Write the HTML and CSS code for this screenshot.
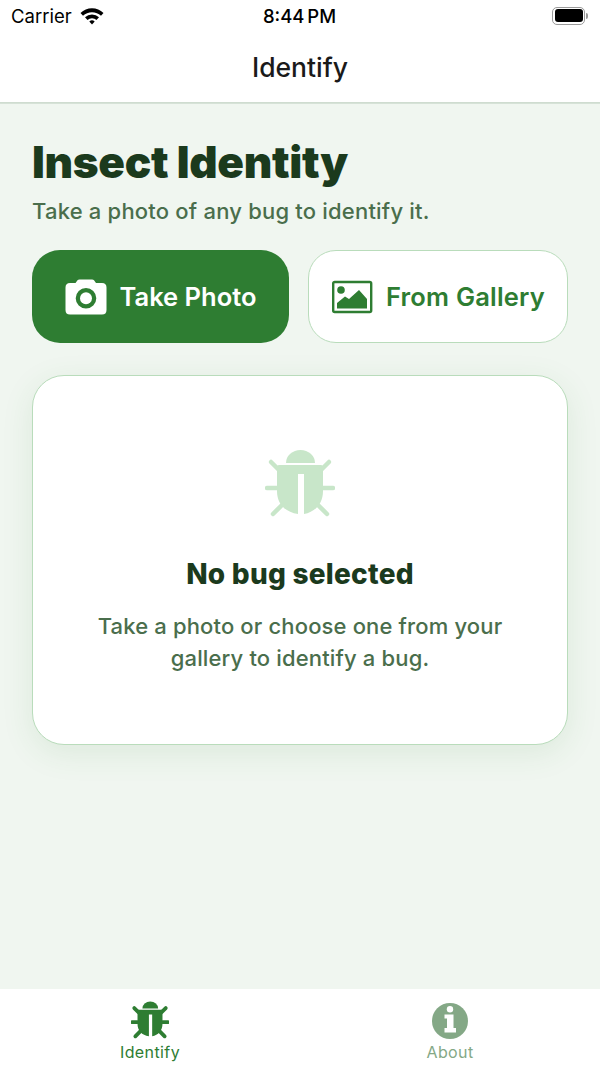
FILE: index.html
```html
<!DOCTYPE html>
<html>
<head>
    <title>Identify</title>
    <link rel="stylesheet" href="styles.css">
</head>
<body>
    <div class="app">
        <div class="status-bar">
            <div class="status-left">
                <span>Carrier</span>
                <svg class="wifi" width="24" height="18" viewBox="0 0 24 18">
                    <path d="M0.5 6 A16.5 16.5 0 0 1 23.5 6 L21 8.8 A13 13 0 0 0 3 8.8 Z" fill="#000"/>
                    <path d="M5 10.3 A10 10 0 0 1 19 10.3 L16.5 13 A6.4 6.4 0 0 0 7.5 13 Z" fill="#000"/>
                    <path d="M9.3 14.6 A3.8 3.8 0 0 1 14.7 14.6 L12 17.6 Z" fill="#000"/>
                </svg>
            </div>
            <div class="status-time">8:44 PM</div>
            <div class="status-right">
                <div class="battery"><div class="battery-fill"></div></div>
                <div class="battery-cap"></div>
            </div>
        </div>

        <header class="nav-bar">Identify</header>

        <main class="content">
            <h1>Insect Identity</h1>
            <p class="subtitle">Take a photo of any bug to identify it.</p>

            <div class="actions">
                <button class="btn btn-primary">
                    <svg width="42" height="36" viewBox="0 0 42 36">
                        <path fill="#fff" fill-rule="evenodd" d="M5 4 H10.5 L12.5 1.2 Q13.1 0.4 14.5 0.4 H27 Q28.4 0.4 29 1.2 L31 4 H37 Q41.5 4 41.5 8.5 V31 Q41.5 35.5 37 35.5 H5 Q0.5 35.5 0.5 31 V8.5 Q0.5 4 5 4 Z M21 9 A10.3 10.3 0 1 0 21 29.6 A10.3 10.3 0 1 0 21 9 Z"/>
                        <circle cx="21" cy="19.3" r="6" fill="#fff"/>
                    </svg>
                    <span>Take Photo</span>
                </button>
                <button class="btn btn-secondary">
                    <svg width="42" height="34" viewBox="0 0 42 34">
                        <rect x="2.2" y="2" width="38" height="30" rx="1.5" fill="none" stroke="#2e7d32" stroke-width="2.4"/>
                        <circle cx="10" cy="10" r="3.8" fill="#2e7d32"/>
                        <path fill="#2e7d32" d="M6 28.5 V23 L14 16.5 L18 19 L28 10 L36 19 V28.5 Z"/>
                    </svg>
                    <span>From Gallery</span>
                </button>
            </div>

            <section class="empty-card">
                <svg class="empty-icon" width="70" height="70" viewBox="0 0 70 70">
                    <use href="#bug"/>
                </svg>
                <h2>No bug selected</h2>
                <p>Take a photo or choose one from your<br>gallery to identify a bug.</p>
            </section>
        </main>

        <nav class="tab-bar">
            <div class="tab tab-active">
                <div class="tab-icon">
                    <svg width="38" height="38" viewBox="0 0 70 70">
                        <use href="#bug"/>
                    </svg>
                </div>
                <span>Identify</span>
            </div>
            <div class="tab tab-muted">
                <div class="tab-icon">
                    <svg width="36" height="36" viewBox="0 0 36 36">
                        <circle cx="18" cy="18" r="18" fill="#84a886"/>
                        <circle cx="18" cy="6.3" r="3.2" fill="#fff"/>
                        <path fill="#fff" d="M12.5 11.5 H21.5 V25 H24 V29.5 H12.5 V25 H15 V15.5 H12.5 Z"/>
                    </svg>
                </div>
                <span>About</span>
            </div>
        </nav>
    </div>

    <!-- bug icon, used in the card and the tab bar -->
    <svg class="defs" width="0" height="0">
        <symbol id="bug" viewBox="0 0 70 70">
            <path fill="currentColor" d="M21 14 A14.5 13 0 0 1 50 14 Z"/>
            <path fill="currentColor" d="M14 16 H56 Q58 16 58 18 V42 C58 55 50 63 39 65 V25 H33 V65 C20 63 12 55 12 42 V18 Q12 16 14 16 Z"/>
            <g class="bug-legs" stroke="currentColor" stroke-linecap="round" fill="none">
                <path d="M6 13 L14 21"/>
                <path d="M64 13 L56 21"/>
                <path d="M2 39 H12"/>
                <path d="M68 39 H58"/>
                <path d="M8 65 L17 56"/>
                <path d="M62 65 L53 56"/>
            </g>
        </symbol>
    </svg>
</body>
</html>
```

FILE: styles.css
```css
* {
    box-sizing: border-box;
}

html, body {
    margin: 0;
    padding: 0;
}

body {
    font-family: Inter, "Liberation Sans", sans-serif;
    background-color: #fff;
}

.app {
    width: 600px;
    height: 1067px;
    display: flex;
    flex-direction: column;
    overflow: hidden;
}

.status-bar {
    height: 40px;
    padding: 0 12px 9px 11px;
    display: grid;
    grid-template-columns: 1fr auto 1fr;
    align-items: center;
    color: #000;
    font-size: 18.5px;
}

.status-left {
    display: flex;
    align-items: center;
    gap: 8px;
}

.status-time {
    font-weight: 500;
    font-size: 18.5px;
    word-spacing: -2px;
}

.status-right {
    display: flex;
    align-items: center;
    justify-content: flex-end;
    gap: 1px;
}

.battery {
    width: 33px;
    height: 18px;
    border: 1.5px solid #9a9a9a;
    border-radius: 5px;
    padding: 1.5px;
}

.battery-fill {
    height: 100%;
    background-color: #000;
    border-radius: 3px;
}

.battery-cap {
    width: 2px;
    height: 6px;
    background-color: #9a9a9a;
    border-radius: 0 2px 2px 0;
}

.nav-bar {
    height: 63px;
    padding-bottom: 8px;
    display: flex;
    align-items: center;
    justify-content: center;
    font-size: 26.5px;
    font-weight: 500;
    color: #1a1a1a;
    border-bottom: 1px solid #cfdcd0;
    box-shadow: 0 1px 0 #d6e2d7;
    position: relative;
}

.content {
    flex: 1;
    background-color: #f0f6f0;
    padding: 32px 32px 0;
}

h1 {
    margin: 0;
    font-size: 44px;
    line-height: 54px;
    font-weight: 900;
    letter-spacing: -0.3px;
    color: #1b3a1d;
}

.subtitle {
    margin: 7px 0 0;
    font-size: 22px;
    line-height: 30px;
    font-weight: 500;
    letter-spacing: 0.2px;
    color: #4a6e4c;
}

.actions {
    display: flex;
    gap: 19px;
    margin-top: 24px;
}

.btn {
    height: 93px;
    border-radius: 28px;
    display: flex;
    align-items: center;
    justify-content: center;
    gap: 13px;
    font-family: inherit;
    font-size: 25.5px;
    font-weight: 600;
    padding: 0;
}

.btn-primary {
    width: 257px;
    background-color: #2e7d32;
    border: none;
    color: #fff;
}

.btn-secondary {
    width: 260px;
    background-color: #fff;
    border: 1.5px solid #b9dcbb;
    color: #2e7d32;
    letter-spacing: 0.2px;
}

.empty-card {
    margin-top: 32px;
    height: 370px;
    background-color: #fff;
    border: 1.5px solid #b9dcbb;
    border-radius: 32px;
    box-shadow: 0 8px 32px rgba(46, 125, 50, 0.1);
    display: flex;
    flex-direction: column;
    align-items: center;
    padding-top: 73px;
    text-align: center;
}

.empty-icon {
    color: #c8e6c9;
}

.empty-card h2 {
    margin: 37px 0 0;
    font-size: 28px;
    line-height: 36px;
    font-weight: 800;
    letter-spacing: 0.25px;
    color: #1b3a1d;
}

.empty-card p {
    margin: 18px 0 0;
    font-size: 22px;
    line-height: 32px;
    font-weight: 500;
    letter-spacing: 0.15px;
    color: #4a6e4c;
}

.bug-legs {
    stroke-width: var(--leg-width, 4.5);
}

.tab-bar {
    height: 78px;
    background-color: #fff;
    display: flex;
    padding-top: 11px;
}

.tab {
    flex: 1;
    display: flex;
    flex-direction: column;
    align-items: center;
    gap: 3px;
    font-size: 16px;
    line-height: 20px;
    font-weight: 400;
    letter-spacing: 0.4px;
}

.tab-icon {
    height: 39px;
    display: flex;
    align-items: flex-end;
}

.tab-active {
    color: #2e7d32;
    --leg-width: 7;
}

.tab-muted {
    color: #84a886;
}

.defs {
    position: absolute;
}
```
